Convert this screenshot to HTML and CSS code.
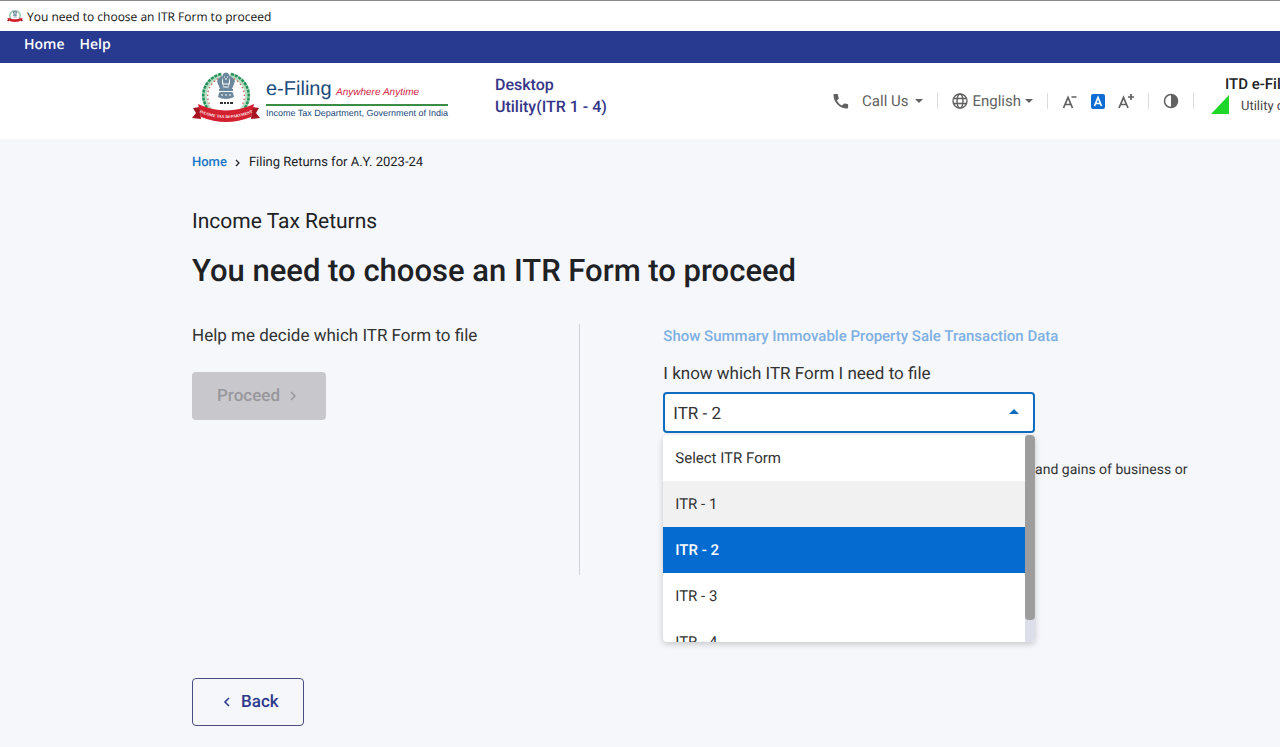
FILE: index.html
```html
<!DOCTYPE html>
<html lang="en">
<head>
  <meta charset="UTF-8" />
  <meta name="viewport" content="width=device-width, initial-scale=1.0"/>
  <title>You need to choose an ITR Form to proceed</title>
  <link rel="stylesheet" href="styles.css">
</head>
<body>

  <svg class="defs" width="0" height="0" aria-hidden="true">
    <symbol id="emblem" viewBox="0 0 68 50">
      <!-- wreath -->
      <path d="M30 3C15 7 8 21 15 34c2 4 6 7 11 8M38 3c15 4 22 18 15 31-2 4-6 7-11 8" fill="none" stroke="#b9ddc5" stroke-width="5"/>
      <path d="M29 2C14 6 7 21 14 34c2 4 6 7 11 9M39 2c15 4 22 19 15 32-2 4-6 7-11 9" fill="none" stroke="#23915a" stroke-width="2.5" stroke-dasharray="3 1"/>
      <path d="M30 5C18 9 12 22 18 33M38 5c12 4 18 17 12 28" fill="none" stroke="#cf5a58" stroke-width="1.3" stroke-dasharray="1.5 2.5"/>
      <!-- lion capital -->
      <g fill="#6b879d">
        <path d="M31 2c2-2 4-2 6 0l1 3-1 4h-6l-1-4z"/>
        <path d="M27 6l3-2v7l2 6h-4l-2-5-1-3zM41 6l-3-2v7l-2 6h4l2-5 1-3z"/>
        <path d="M31 9h6l-1 9h-4z"/>
        <path d="M27 17h14v2H27zM27 21q0-1 2-1h10q2 0 2 1l1 4q-8 4-16 0z"/>
      </g>
      <path d="M32 5h1M35 5h1M33 7h2M31 12h6M32 15h4M29 23h2M33 23h2M37 23h2" stroke="#fff" stroke-width="1"/>
      <path d="M28 31h3M32 31h2M35 31h2M38 31h3" stroke="#333" stroke-width="2"/>
      <!-- ribbon -->
      <path d="M8 35L1 36l3 5-4 5 9 1zM60 35l7 1-3 5 4 5-9 1z" fill="#a81522"/>
      <path d="M6 32Q34 45 62 32l-3 13Q34 55 9 45z" fill="#d3202f"/>
    </symbol>
  </svg>

  <div class="title-bar">
    <svg class="title-icon" aria-hidden="true"><use href="#emblem"/></svg>
    <span>You need to choose an ITR Form to proceed</span>
  </div>

  <nav class="menu-bar">
    <a href="#">Home</a>
    <a href="#">Help</a>
  </nav>

  <header class="header">
    <a class="logo" href="#">
      <svg class="logo-emblem" viewBox="0 0 68 50" role="img" aria-label="Income Tax Department">
        <use href="#emblem" width="68" height="50"/>
        <path id="ribbon-line" d="M6 40Q34 52 62 40" fill="none"/>
        <text class="ribbon-text"><textPath href="#ribbon-line" startOffset="50%" text-anchor="middle">INCOME TAX DEPARTMENT</textPath></text>
      </svg>
      <span class="logo-text">
        <span class="logo-top"><span class="logo-name">e-Filing</span> <em>Anywhere Anytime</em></span>
        <span class="logo-sub">Income Tax Department, Government of India</span>
      </span>
    </a>
    <div class="utility">Desktop<br>Utility(ITR 1 - 4)</div>

    <div class="tools">
      <button class="tool call" type="button">
        <svg width="18" height="18" viewBox="0 0 24 24" aria-hidden="true"><path fill="currentColor" d="M7 2.5H3C2.300 2.500 2 3 2 3.600 2 13.800 10.200 22 20.400 22c.6 0 1.100-.4 1.100-1v-4c0-.6-.4-1-1-1-1.300 0-2.500-.2-3.700-.6-.4-.1-.8 0-1.100.3l-2.300 2.300c-3-1.500-5.300-3.800-6.800-6.800L8.800 9c.3-.3.4-.7.300-1.100C8.700 6.700 8 5 8 3.600 8 3 7.600 2.500 7 2.500z"/></svg>
        Call Us <span class="caret"></span>
      </button>
      <span class="divider"></span>
      <button class="tool lang" type="button">
        <svg width="16" height="16" viewBox="0 0 16 16" fill="none" stroke="currentColor" stroke-width="1.4" aria-hidden="true"><circle cx="8" cy="8" r="7"/><ellipse cx="8" cy="8" rx="3" ry="7"/><path d="M1.500 5.500h13M1.500 10.500h13"/></svg>
        English <span class="caret"></span>
      </button>
      <span class="divider"></span>
      <div class="sizes">
        <button class="tool" type="button" aria-label="Decrease text size">
          <svg width="16" height="16" viewBox="0 0 16 16" fill="none" stroke="currentColor" stroke-width="1.700" aria-hidden="true"><path d="M1.500 15L6 4.500 10.500 15M3 11.500h6M9.500 4h5"/></svg>
        </button>
        <button class="tool size-on" type="button" aria-label="Default text size">
          <svg width="14" height="15" viewBox="0 0 14 15" fill="none" stroke="currentColor" stroke-width="1.700" aria-hidden="true"><path d="M3.500 12L7 3.500 10.500 12M4.500 9.500h5"/></svg>
        </button>
        <button class="tool" type="button" aria-label="Increase text size">
          <svg width="16" height="16" viewBox="0 0 16 16" fill="none" stroke="currentColor" stroke-width="1.700" aria-hidden="true"><path d="M1 15L5.500 4.500 10 15M2.500 11.500h6M10 4h6M13 1v6"/></svg>
        </button>
      </div>
      <span class="divider"></span>
      <button class="tool" type="button" aria-label="Contrast">
        <svg width="16" height="16" viewBox="0 0 16 16" aria-hidden="true"><circle cx="8" cy="8" r="6.500" fill="none" stroke="currentColor" stroke-width="1.500"/><path d="M8 1.500a6.500 6.500 0 0 1 0 13z" fill="currentColor"/></svg>
      </button>
      <span class="divider"></span>
    </div>

    <div class="status">
      <strong>ITD e-Filing Utility</strong>
      <span class="status-line">
        <svg width="18" height="19" viewBox="0 0 18 19" aria-hidden="true"><path d="M18 0v19H0z" fill="#1fd62b"/></svg>
        Utility online
      </span>
    </div>
  </header>

  <main class="main">
    <nav class="breadcrumb" aria-label="Breadcrumb">
      <a href="#">Home</a>
      <svg width="6" height="8" viewBox="0 0 6 8" aria-hidden="true"><path d="M1 1l3 3-3 3" fill="none" stroke="currentColor" stroke-width="1.200"/></svg>
      <span>Filing Returns for A.Y. 2023-24</span>
    </nav>

    <h2>Income Tax Returns</h2>
    <h1>You need to choose an ITR Form to proceed</h1>

    <div class="choices">
      <section class="help-me">
        <p>Help me decide which ITR Form to file</p>
        <button class="proceed" type="button" disabled>
          Proceed
          <svg width="7" height="10" viewBox="0 0 7 10" aria-hidden="true"><path d="M1 1l4 4-4 4" fill="none" stroke="currentColor" stroke-width="1.500"/></svg>
        </button>
      </section>

      <section class="i-know">
        <a class="summary-link" href="#">Show Summary Immovable Property Sale Transaction Data</a>
        <label for="itr-form">I know which ITR Form I need to file</label>
        <div class="select-box">
          <select id="itr-form">
            <option>Select ITR Form</option>
            <option>ITR - 1</option>
            <option selected>ITR - 2</option>
            <option>ITR - 3</option>
            <option>ITR - 4</option>
          </select>
          <div class="panel">
            <ul class="options" role="listbox" aria-label="ITR Form">
              <li role="option">Select ITR Form</li>
              <li role="option" class="hovered">ITR - 1</li>
              <li role="option" class="selected" aria-selected="true">ITR - 2</li>
              <li role="option">ITR - 3</li>
              <li role="option">ITR - 4</li>
            </ul>
            <div class="scrollbar"><div class="thumb"></div></div>
          </div>
        </div>
        <p class="description">For Individuals and HUFs not having an income from profits and gains of business or profession</p>
      </section>
    </div>

    <button class="back" type="button">
      <svg width="7" height="10" viewBox="0 0 7 10" aria-hidden="true"><path d="M6 1L2 5l4 4" fill="none" stroke="currentColor" stroke-width="1.600"/></svg>
      Back
    </button>
  </main>

</body>
</html>
```
FILE: styles.css
```css
* {
  box-sizing: border-box;
}
body {
  margin: 0;
  min-height: 100vh;
  font-family: Roboto, sans-serif;
  font-size: 16px;
  text-rendering: geometricPrecision;
  background-color: #f5f7fb;
  color: #202124;
  overflow-x: hidden;
}
a {
  text-decoration: none;
}
button, select {
  font-family: inherit;
  text-rendering: inherit;
  cursor: pointer;
}
.defs {
  position: absolute;
}
.ribbon-text {
  font: bold 4px "Liberation Serif", serif;
  fill: #fff;
}

.title-bar {
  display: flex;
  align-items: center;
  gap: 4px;
  height: 31px;
  padding-left: 7px;
  border-top: 1px solid #8a8a8a;
  background-color: #fff;
  font: 12px "Open Sans", sans-serif;
  color: #111;
}
.title-icon {
  width: 16px;
  height: 12px;
}
.menu-bar {
  display: flex;
  gap: 15px;
  height: 32px;
  padding: 4px 24px;
  background-color: #283a8f;
  font: 600 14px/20px "Open Sans", sans-serif;
}
.menu-bar a {
  color: #fff;
}

.header {
  display: flex;
  height: 76px;
  padding-left: 15%;
  background-color: #fff;
  white-space: nowrap;
  overflow: hidden;
}
.logo {
  display: flex;
  gap: 6px;
  padding-top: 9px;
}
.logo-emblem {
  flex: none;
  width: 68px;
  height: 50px;
}
.logo-text {
  padding-top: 6px;
  font-family: "Liberation Sans", sans-serif;
  color: #1b4b7c;
}
.logo-top {
  display: block;
  border-bottom: 2px solid #3c8c46;
  line-height: 22px;
}
.logo-name {
  font-size: 20px;
}
.logo-top em {
  font-size: 10px;
  color: #cf2040;
}
.logo-sub {
  display: block;
  font-size: 9px;
  line-height: 14px;
}
.utility {
  margin-left: 47px;
  padding-top: 11px;
  font-weight: 500;
  line-height: 22px;
  color: #353587;
}
.tools {
  display: flex;
  align-items: center;
  gap: 14px;
  margin-left: auto;
  color: #616161;
}
.tool {
  display: flex;
  align-items: center;
  padding: 0;
  border: none;
  background: none;
  font-size: 15px;
  color: inherit;
}
.call {
  gap: 12px;
}
.lang {
  gap: 4px;
}
.call .caret {
  margin-left: -5px;
}
.caret {
  border: 4px solid transparent;
  border-top-color: currentColor;
  border-bottom: none;
}
.divider {
  width: 1px;
  height: 16px;
  background-color: #dcdcdc;
}
.sizes {
  display: flex;
  align-items: center;
  gap: 13px;
}
.size-on {
  border-radius: 2px;
  background-color: #0f6cd3;
  color: #fff;
}
.status {
  width: 69px;
  margin-left: 17px;
  padding-top: 11px;
}
.status strong {
  display: block;
  margin-left: 14px;
  font-size: 15px;
  font-weight: 500;
  line-height: 21px;
}
.status-line {
  display: flex;
  align-items: flex-end;
  gap: 12px;
  font-size: 13px;
  color: #444;
}
.status-line svg {
  flex: none;
}

.main {
  padding: 15px 6% 20px 15%;
}
.breadcrumb {
  display: flex;
  align-items: center;
  gap: 8px;
  font-size: 13px;
  line-height: 18px;
}
.breadcrumb a {
  font-weight: 500;
  color: #1976c5;
}
h2 {
  margin: 37px 0 0;
  font-size: 21px;
  font-weight: 400;
  line-height: 26px;
}
h1 {
  margin: 14px 0 0;
  font-size: 31px;
  font-weight: 500;
  line-height: 44px;
}
.choices {
  display: flex;
  min-height: 251px;
  margin-top: 31px;
}
.help-me {
  flex: none;
  width: 38.4%;
  border-right: 1px solid #cfd2d8;
}
.help-me p {
  margin: 0 0 24px;
  font-size: 17px;
  line-height: 24px;
  color: #333;
}
.proceed, .back {
  display: flex;
  align-items: center;
  border-radius: 4px;
  height: 48px;
}
.proceed {
  gap: 10px;
  padding: 0 29px 0 25px;
  border: none;
  background-color: #c8c7cc;
  font-size: 17px;
  font-weight: 500;
  color: #98979c;
  cursor: default;
}
.i-know {
  flex: 1;
  padding-left: 83px;
}
.summary-link {
  display: block;
  font-size: 15px;
  font-weight: 500;
  line-height: 24px;
  color: #7fb0e2;
}
label {
  display: block;
  margin: 14px 0 6px;
  font-size: 17px;
  line-height: 24px;
  color: #333;
}
.select-box {
  position: relative;
  max-width: 372px;
}
select {
  display: block;
  width: 100%;
  height: 41px;
  padding: 2px 8px 0;
  border: 2px solid #0f6cbf;
  border-radius: 4px;
  appearance: none;
  outline: none;
  background-color: #fff;
  font-size: 17px;
  color: #333;
}
.select-box::after {
  content: "";
  position: absolute;
  top: 17px;
  right: 16px;
  border: 5px solid transparent;
  border-bottom-color: #0f6cbf;
  border-top: none;
}
.panel {
  position: absolute;
  top: 100%;
  left: 0;
  right: 0;
  z-index: 1;
  display: flex;
  height: 207px;
  margin-top: 2px;
  border-radius: 4px;
  background-color: #fff;
  box-shadow: 0 2px 6px rgba(0, 0, 0, 0.2);
  overflow: hidden;
}
.options {
  flex: 1;
  margin: 0;
  padding: 0;
  list-style: none;
}
.options li {
  height: 46px;
  padding: 0 12px;
  font-size: 15px;
  line-height: 46px;
  color: #333;
}
.options .hovered {
  background-color: #f1f1f1;
}
.options .selected {
  background-color: #066bd1;
  font-weight: 500;
  color: #fff;
}
.scrollbar {
  width: 10px;
  background-color: #dcdfea;
}
.thumb {
  height: 185px;
  border-radius: 4px;
  background-color: #9d9d9d;
}
.description {
  margin: 26px 0 0;
  font-size: 14px;
  line-height: 23px;
  color: #333;
}
.back {
  gap: 11px;
  margin-top: 103px;
  padding: 0 24px 0 30px;
  border: 1px solid #4c4c80;
  background: none;
  font-size: 17px;
  font-weight: 500;
  color: #2e3a8c;
}
```
